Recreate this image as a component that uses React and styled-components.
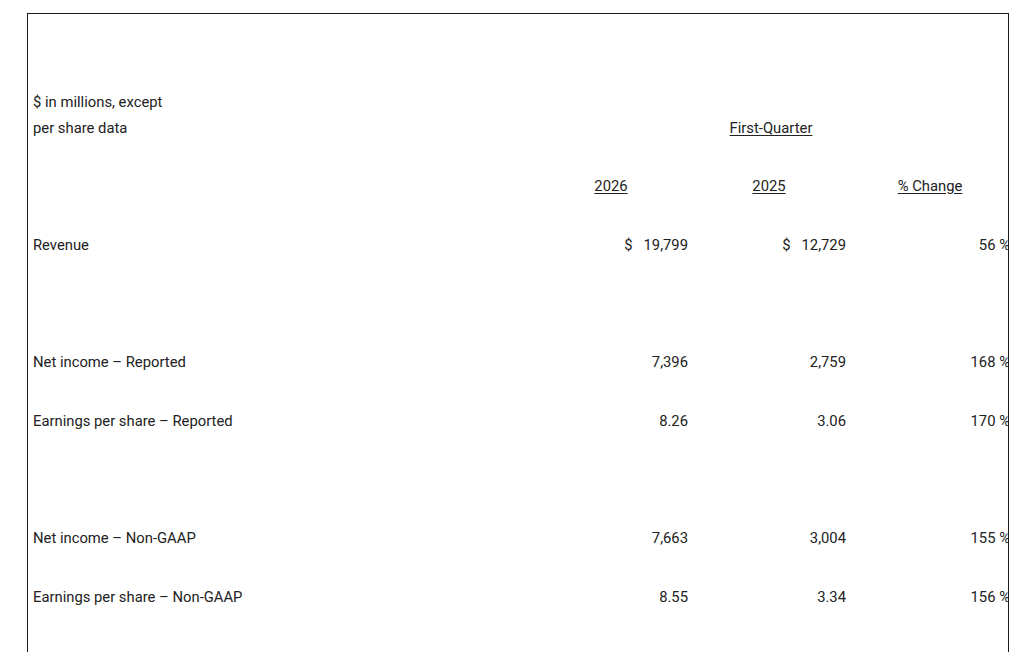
import React from "react";
import styled, { createGlobalStyle } from "styled-components";

const GlobalStyle = createGlobalStyle`
    html, body {
        margin: 0;
        padding: 0;
        background: #ffffff;
        overflow: hidden;
    }
    body {
        font-family: Roboto, "Liberation Sans", Arial, sans-serif;
        color: #222222;
    }
`;

const rows = [
    { label: "Revenue", a: "19,799", b: "12,729", pct: "56", dollar: true },
    { spacer: true },
    { label: "Net income \u2013 Reported", a: "7,396", b: "2,759", pct: "168" },
    { label: "Earnings per share \u2013 Reported", a: "8.26", b: "3.06", pct: "170" },
    { spacer: true },
    { label: "Net income \u2013 Non-GAAP", a: "7,663", b: "3,004", pct: "155" },
    { label: "Earnings per share \u2013 Non-GAAP", a: "8.55", b: "3.34", pct: "156" },
    { spacer: true },
];

const App = () => {
    return (
        <>
            <GlobalStyle />
            <Frame>
                <TitleRow>
                    <Label>
                        $ in millions, except
                        <br />
                        per share data
                    </Label>
                    <span />
                    <Heading shift={4}>First-Quarter</Heading>
                    <span />
                </TitleRow>
                <Row>
                    <span />
                    <Heading>2026</Heading>
                    <Heading>2025</Heading>
                    <Heading>% Change</Heading>
                </Row>
                {rows.map((row, i) =>
                    row.spacer ? (
                        <Row key={i} />
                    ) : (
                        <Row key={i}>
                            <Label>{row.label}</Label>
                            <Value>
                                {row.dollar && <Dollar>$</Dollar>}
                                {row.a}
                            </Value>
                            <Value>
                                {row.dollar && <Dollar>$</Dollar>}
                                {row.b}
                            </Value>
                            <Value>{row.pct} %</Value>
                        </Row>
                    )
                )}
            </Frame>
        </>
    );
};

const Frame = styled.div`
    margin: 13px 0 0 27px;
    width: 982px;
    height: 700px;
    box-sizing: border-box;
    border: 1px solid #1a1a1a;
    overflow: hidden;
    font-size: 14.8px;
`;

const Row = styled.div`
    display: grid;
    grid-template-columns: 504px 158px 158px 164px;
    height: 58.75px;
    align-items: center;
    line-height: 20px;
`;

const TitleRow = styled(Row)`
    height: 142.5px;
    align-items: end;
    line-height: 26px;
    padding-bottom: 16px;
    box-sizing: border-box;
`;

const Label = styled.div`
    padding-left: 5px;
    white-space: nowrap;
`;

const Heading = styled.div`
    text-align: center;
    text-decoration: underline;
    text-underline-offset: 2px;
    white-space: nowrap;
    padding-left: ${(p) => (p.shift ? `${p.shift}px` : "0")};
`;

const Value = styled.div`
    display: flex;
    justify-content: flex-end;
    align-items: baseline;
    padding-right: 2px;
    white-space: nowrap;
`;

const Dollar = styled.span`
    margin-right: 11px;
`;

export default App;
